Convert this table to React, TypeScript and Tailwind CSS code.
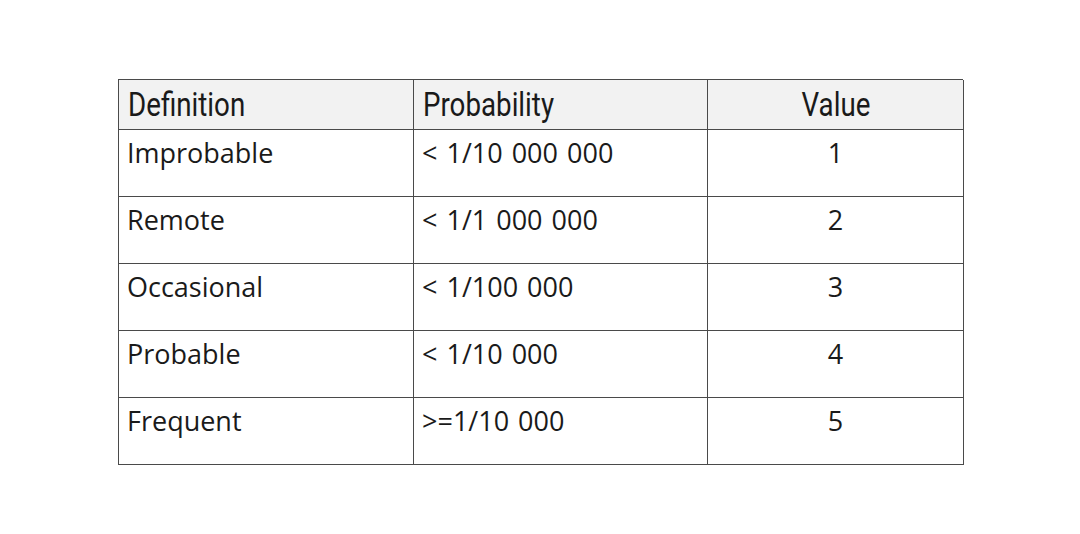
import React from "react";

const rows: [string, string, string][] = [
  ["Improbable", "< 1/10 000 000", "1"],
  ["Remote", "< 1/1 000 000", "2"],
  ["Occasional", "< 1/100 000", "3"],
  ["Probable", "< 1/10 000", "4"],
  ["Frequent", ">=1/10 000", "5"],
];

export default function App() {
  return (
    <div className="w-[1080px] h-[534px] bg-white pt-[79px] pl-[118px]">
      <div className="w-[845px] grid grid-cols-[295px_294px_256px] border-t-[1.5px] border-l-[1.5px] border-[#4a4a4a]">
        {["Definition", "Probability", "Value"].map((h, i) => (
          <div
            key={h}
            className={`h-[50px] bg-[#f2f2f2] border-r-[1.5px] border-b-[1.5px] border-[#4a4a4a] flex items-start pt-[7px] ${
              i === 2 ? "justify-center" : "pl-[9px]"
            }`}
          >
            <span
              className={`inline-block text-[33px] leading-[36px] text-[#1a1a1a] scale-x-[0.84] ${
                i === 2 ? "origin-center" : "origin-left"
              }`}
              style={{ fontFamily: "Roboto, sans-serif" }}
            >
              {h}
            </span>
          </div>
        ))}
        {rows.map((r) =>
          r.map((c, i) => (
            <div
              key={r[0] + i}
              className={`h-[67px] border-r-[1.5px] border-b-[1.5px] border-[#4a4a4a] flex items-start pt-[5px] ${
                i === 2 ? "justify-center" : "pl-[8px]"
              }`}
            >
              <span
                className="text-[27px] leading-[36px] text-[#1a1a1a] [word-spacing:2px]"
                style={{ fontFamily: "'Open Sans', sans-serif" }}
              >
                {c}
              </span>
            </div>
          ))
        )}
      </div>
    </div>
  );
}
